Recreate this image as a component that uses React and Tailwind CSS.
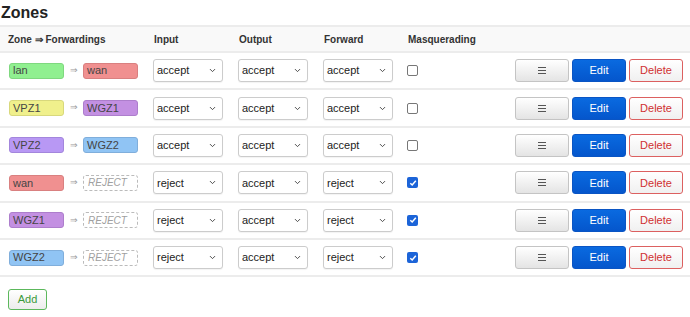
import { ChevronDown } from 'lucide-react';

const zones = [
  { name: 'lan', color: 'bg-[#90f090] border-[#7fd87f]', fwd: { name: 'wan', color: 'bg-[#f09090] border-[#d98080]' }, input: 'accept', output: 'accept', forward: 'accept', masq: false },
  { name: 'VPZ1', color: 'bg-[#f0f08c] border-[#d8d87c]', fwd: { name: 'WGZ1', color: 'bg-[#c390e2] border-[#ad7ecc]' }, input: 'accept', output: 'accept', forward: 'accept', masq: false },
  { name: 'VPZ2', color: 'bg-[#b898f4] border-[#a386dc]', fwd: { name: 'WGZ2', color: 'bg-[#90c4f4] border-[#80aedb]' }, input: 'accept', output: 'accept', forward: 'accept', masq: false },
  { name: 'wan', color: 'bg-[#f09090] border-[#d98080]', fwd: null, input: 'reject', output: 'accept', forward: 'reject', masq: true },
  { name: 'WGZ1', color: 'bg-[#c390e2] border-[#ad7ecc]', fwd: null, input: 'reject', output: 'accept', forward: 'reject', masq: true },
  { name: 'WGZ2', color: 'bg-[#90c4f4] border-[#80aedb]', fwd: null, input: 'reject', output: 'accept', forward: 'reject', masq: true },
];

function Badge({ zone }) {
  if (!zone) {
    return (
      <span className="w-[55px] h-[16px] flex items-center pl-[4px] border border-dashed border-[#bbbbbb] rounded-[3px] text-[10px] italic text-[#a0a0a0]">
        REJECT
      </span>
    );
  }
  return (
    <span className={`w-[55px] h-[16px] flex items-center pl-[3px] border rounded-[3px] text-[11px] text-[#454545] ${zone.color}`}>
      {zone.name}
    </span>
  );
}

function Select({ value }) {
  return (
    <div className="w-[70px] h-[23px] flex items-center justify-between pl-[3px] pr-[5px] border border-[#cccccc] rounded-[3px] bg-white text-[11px] text-[#222] shadow-[0_1px_1px_rgba(0,0,0,0.05)]">
      <span>{value}</span>
      <ChevronDown size={9} strokeWidth={2.5} className="text-[#444]" />
    </div>
  );
}

function Checkbox({ checked }) {
  if (checked) {
    return (
      <span className="w-[11px] h-[11px] rounded-[2px] bg-[#1c64d8] flex items-center justify-center">
        <svg width="8" height="8" viewBox="0 0 8 8">
          <path d="M1.3 4.2 L3.2 6 L6.8 1.8" fill="none" stroke="white" strokeWidth="1.5" />
        </svg>
      </span>
    );
  }
  return <span className="w-[11px] h-[11px] rounded-[2px] border border-[#777] bg-white" />;
}

export default function App() {
  return (
    <div className="w-[690px] h-[317px] bg-white font-['Liberation_Sans',Arial,sans-serif] text-[#222]">
      <h2 className="text-[16px] font-bold leading-none pt-[5px] pl-[1px] h-[25px]">Zones</h2>
      <div className="border-t-2 border-[#ececec]">
        <div className="grid grid-cols-[146px_85px_85px_85px_1fr] items-center h-[26px] bg-[#f9f9f9] border-b-2 border-[#ececec] text-[10px] font-bold text-[#333]">
          <span className="pl-[8px]">Zone ⇒ Forwardings</span>
          <span className="pl-[8px]">Input</span>
          <span className="pl-[8px]">Output</span>
          <span className="pl-[8px]">Forward</span>
          <span className="pl-[7px]">Masquerading</span>
        </div>
        {zones.map((z) => (
          <div key={z.name} className="grid grid-cols-[146px_85px_85px_85px_1fr_auto] items-center h-[37.4px] border-b-2 border-[#ececec]">
            <div className="flex items-center pl-[9px]">
              <Badge zone={z} />
              <span className="w-[19px] text-center text-[9px] text-[#999]">⇒</span>
              <Badge zone={z.fwd} />
            </div>
            <div className="pl-[7px]"><Select value={z.input} /></div>
            <div className="pl-[7px]"><Select value={z.output} /></div>
            <div className="pl-[7px]"><Select value={z.forward} /></div>
            <div className="pl-[6px] flex"><Checkbox checked={z.masq} /></div>
            <div className="flex gap-[3px] pr-[7px]">
              <button className="w-[54px] h-[23px] rounded-[3px] border border-[#c4c4c4] bg-gradient-to-b from-white to-[#e4e4e4] flex items-center justify-center">
                <svg width="8" height="7" viewBox="0 0 8 7">
                  <path d="M0 0.5H8M0 3.5H8M0 6.5H8" stroke="#555" strokeWidth="1" />
                </svg>
              </button>
              <button className="w-[54px] h-[23px] rounded-[3px] border border-[#0a55c4] bg-gradient-to-b from-[#0a6ae0] to-[#0556cc] text-[11px] text-white">Edit</button>
              <button className="w-[54px] h-[23px] rounded-[3px] border border-[#dc6060] bg-gradient-to-b from-white to-[#f0f0f0] text-[11px] text-[#d03030]">Delete</button>
            </div>
          </div>
        ))}
      </div>
      <div className="pl-[8px] pt-[9px]">
        <button className="w-[39px] h-[21px] rounded-[3px] border border-[#5cb85c] bg-gradient-to-b from-white to-[#ececec] text-[11px] text-[#3a9a3a]">Add</button>
      </div>
    </div>
  );
}
